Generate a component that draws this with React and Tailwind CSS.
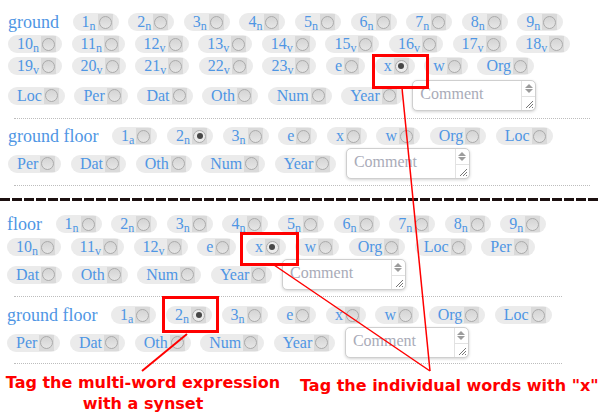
import React from 'react';

const blue = 'text-[#4f96e4]';

const Radio = ({ on }) => (
  <span className="ml-[2px] flex h-[16px] w-[15px] items-center justify-center bg-[#dadada]">
    <span
      className={
        'flex h-[13px] w-[13px] items-center justify-center rounded-full border border-[#ababab] ' +
        (on ? 'bg-[#ececec]' : 'bg-[linear-gradient(#d4d4d4,#e6e6e6)]')
      }
    >
      {on && <span className="h-[6px] w-[6px] rounded-full bg-[#474747]" />}
    </span>
  </span>
);

const Pill = ({ t, s, on }) => (
  <span className="inline-flex h-[18px] shrink-0 items-center rounded-full bg-[#ebebeb] pl-[9px] pr-[6px]">
    <span className={`text-[16px] leading-none ${blue}`}>
      {t}
      {s && <span className="relative top-[3px] text-[12px]">{s}</span>}
    </span>
    <Radio on={on} />
  </span>
);

const Comment = () => (
  <div className="flex h-[31px] w-[124px] shrink-0 overflow-hidden rounded-[5px] border border-[#cfcfcf] bg-white shadow-[0_1px_3px_rgba(0,0,0,0.18)]">
    <span className="flex-1 pl-[7px] pt-[3px] text-[16px] leading-[20px] text-[#a9abb8]">Comment</span>
    <div className="flex w-[14px] flex-col border-l border-[#e2e2e2]">
      <div className="flex h-[15px] flex-col items-center justify-center gap-[1px]">
        <span className="h-0 w-0 border-x-[4px] border-b-[4px] border-x-transparent border-b-[#9c9c9c]" />
        <span className="h-0 w-0 border-x-[4px] border-t-[4px] border-x-transparent border-t-[#9c9c9c]" />
      </div>
      <div className="relative flex-1 border-t border-[#e2e2e2]">
        <svg className="absolute bottom-[1px] right-[1px]" width="10" height="10" viewBox="0 0 10 10">
          <path d="M9 2 L2 9 M9 5 L5 9 M9 8 L8 9" stroke="#777" strokeWidth="1" />
        </svg>
      </div>
    </div>
  </div>
);

const p = (t, s, on) => ({ t, s, on });
const C = { comment: true };

const Row = ({ items, label, tall, className = '' }) => (
  <div className={`flex items-center gap-x-[9.6px] ${tall ? 'h-[31px]' : 'h-[22px]'} ${className}`}>
    {label && <span className={`mr-[4px] text-[18px] leading-none ${blue}`}>{label}</span>}
    {items.map((it, i) => (it.comment ? <Comment key={i} /> : <Pill key={i} {...it} />))}
  </div>
);

const Dotted = ({ w, className = '' }) => (
  <div className={`ml-[14px] border-t border-dotted border-[#bdbdbd] ${w} ${className}`} />
);

const tags = [p('Loc'), p('Per'), p('Dat'), p('Oth'), p('Num'), p('Year'), C];

const groundFloorRow1 = [p('1', 'a'), p('2', 'n', true), p('3', 'n'), p('e'), p('x'), p('w'), p('Org'), p('Loc')];
const groundFloorRow2 = [p('Per'), p('Dat'), p('Oth'), p('Num'), p('Year'), C];

export default function App() {
  return (
    <div className="relative h-[414px] w-[600px] overflow-hidden bg-white pt-[11px] font-['Liberation_Serif',serif]">
      {/* ground */}
      <div className="pl-[8px]">
        <Row label="ground" items={[1, 2, 3, 4, 5, 6, 7, 8, 9].map((n) => p(String(n), 'n'))} />
        <Row items={[p('10', 'n'), p('11', 'n'), p('12', 'v'), p('13', 'v'), p('14', 'v'), p('15', 'v'), p('16', 'v'), p('17', 'v'), p('18', 'v')]} />
        <Row items={[p('19', 'v'), p('20', 'v'), p('21', 'v'), p('22', 'v'), p('23', 'v'), p('e'), p('x', null, true), p('w'), p('Org')]} />
        <Row tall className="mt-[3px]" items={tags} />
      </div>
      <Dotted w="w-[576px]" className="mt-[7px]" />

      {/* ground floor */}
      <div className="mt-[6px] pl-[8px]">
        <Row label="ground floor" items={groundFloorRow1} />
        <Row tall className="mt-[1px]" items={groundFloorRow2} />
      </div>
      <Dotted w="w-[576px]" className="mt-[6px]" />

      <div className="mt-[12px] h-[3px] w-full bg-[repeating-linear-gradient(90deg,#1c1010_0_10px,transparent_10px_12px)]" />

      {/* floor */}
      <div className="mt-[12px] pl-[7px]">
        <Row label="floor" items={[1, 2, 3, 4, 5, 6, 7, 8, 9].map((n) => p(String(n), 'n'))} />
        <Row className="mt-[1px]" items={[p('10', 'n'), p('11', 'v'), p('12', 'v'), p('e'), p('x', null, true), p('w'), p('Org'), p('Loc'), p('Per')]} />
        <Row tall className="mt-[1px]" items={[p('Dat'), p('Oth'), p('Num'), p('Year'), C]} />
      </div>
      <Dotted w="w-[548px]" className="mt-[6px]" />

      {/* ground floor (multi-word) */}
      <div className="mt-[7px] pl-[7px]">
        <Row label="ground floor" items={groundFloorRow1} />
        <Row tall className="mt-[1px]" items={groundFloorRow2} />
      </div>
      <Dotted w="w-[548px]" className="mt-[5px]" />

      {/* annotations */}
      <div className="mt-[8px] flex font-['DejaVu_Sans',sans-serif] text-[16px] font-bold leading-[21px] text-[#ff0000]">
        <div className="w-[286px] text-center">
          Tag the multi-word expression
          <br />
          with a synset
        </div>
        <div className="ml-[14px] whitespace-nowrap pt-[3px]">Tag the individual words with "x"</div>
      </div>

      {/* highlight boxes */}
      <div className="absolute left-[372px] top-[54px] h-[35px] w-[57px] border-[3px] border-[#ff0000]" />
      <div className="absolute left-[240px] top-[232px] h-[34px] w-[59px] border-[3px] border-[#ff0000]" />
      <div className="absolute left-[162px] top-[296px] h-[37px] w-[57px] border-[3px] border-[#ff0000]" />

      <svg className="pointer-events-none absolute left-0 top-0" width="600" height="414">
        <line x1="402" y1="88" x2="430" y2="371" stroke="#ff0000" strokeWidth="1.5" />
        <line x1="274" y1="265" x2="430" y2="371" stroke="#ff0000" strokeWidth="1.5" />
        <line x1="187" y1="334" x2="142" y2="371" stroke="#ff0000" strokeWidth="2" />
      </svg>
    </div>
  );
}
